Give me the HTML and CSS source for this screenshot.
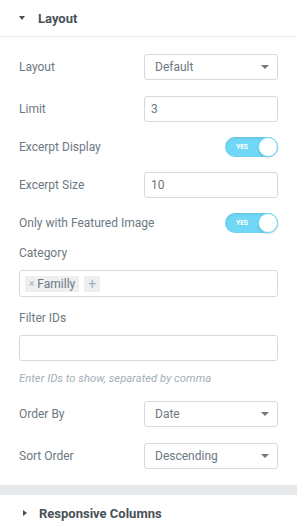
FILE: index.html
```html
<!DOCTYPE html>
<html lang="en">
<head>
    <meta charset="UTF-8">
    <title>Layout Controls</title>
    <link rel="stylesheet" href="styles.css">
</head>
<body>

    <div class="panel">
        <!-- Layout section -->
        <div class="section-head">
            <span class="caret-down"></span>
            <span class="section-title">Layout</span>
        </div>

        <div class="controls">
            <div class="row first">
                <span class="label">Layout</span>
                <div class="select"><span>Default</span><span class="arrow"></span></div>
            </div>
            <div class="row">
                <span class="label">Limit</span>
                <div class="input">3</div>
            </div>
            <div class="row">
                <span class="label">Excerpt Display</span>
                <div class="switch"><span class="switch-text">YES</span><span class="knob"></span></div>
            </div>
            <div class="row">
                <span class="label">Excerpt Size</span>
                <div class="input">10</div>
            </div>
            <div class="row">
                <span class="label">Only with Featured Image</span>
                <div class="switch"><span class="switch-text">YES</span><span class="knob"></span></div>
            </div>

            <div class="block category">
                <span class="label">Category</span>
                <div class="tags">
                    <span class="tag"><span class="tag-x">×</span>Familly</span>
                    <span class="tag add">+</span>
                </div>
            </div>

            <div class="block filter">
                <span class="label">Filter IDs</span>
                <div class="input wide"></div>
                <p class="hint">Enter IDs to show, separated by comma</p>
            </div>

            <div class="row order">
                <span class="label">Order By</span>
                <div class="select"><span>Date</span><span class="arrow"></span></div>
            </div>
            <div class="row sort">
                <span class="label">Sort Order</span>
                <div class="select"><span>Descending</span><span class="arrow"></span></div>
            </div>
        </div>

        <div class="divider"></div>

        <!-- Collapsed section -->
        <div class="section-head">
            <span class="caret-right"></span>
            <span class="section-title">Responsive Columns</span>
        </div>
    </div>

</body>
</html>
```

FILE: styles.css
```css
* {
    margin: 0;
    padding: 0;
    box-sizing: border-box;
}

body {
    font-family: Roboto, 'Liberation Sans', sans-serif;
    background: #fff;
    color: #6d7882;
    font-size: 12px;
    overflow: hidden;
}

.panel {
    width: 297px;
}

.section-head {
    height: 37px;
    display: flex;
    align-items: center;
    padding-left: 19px;
    border-bottom: 1px solid #e6e9ec;
}

.section-title {
    font-size: 13px;
    font-weight: 700;
    color: #495157;
}

.caret-down {
    width: 0;
    height: 0;
    border-left: 3.5px solid transparent;
    border-right: 3.5px solid transparent;
    border-top: 4px solid #495157;
    margin-right: 13px;
}

.caret-right {
    width: 0;
    height: 0;
    border-top: 3.5px solid transparent;
    border-bottom: 3.5px solid transparent;
    border-left: 4px solid #495157;
    margin-left: 4px;
    margin-right: 12px;
}

.controls {
    padding: 17px 19px 16px;
    display: flex;
    flex-direction: column;
}

.row {
    height: 26px;
    display: flex;
    align-items: center;
    justify-content: space-between;
    margin-bottom: 12px;
}

.row.first {
    margin-bottom: 16px;
}

.label {
    display: block;
    line-height: 15px;
}

.select, .input {
    width: 134px;
    height: 26px;
    border: 1px solid #d5dadf;
    border-radius: 3px;
    display: flex;
    align-items: center;
    color: #6d7882;
}

.select {
    padding: 0 10px;
    justify-content: space-between;
}

.input {
    padding: 0 6px;
}

.input.wide {
    width: 100%;
}

.arrow {
    width: 0;
    height: 0;
    border-left: 4px solid transparent;
    border-right: 4px solid transparent;
    border-top: 4px solid #6d7882;
    margin-right: -2px;
}

.switch {
    width: 53px;
    height: 20px;
    border-radius: 10px;
    background: #71d7f7;
    box-shadow: inset 0 1px 3px rgba(0, 0, 0, 0.12);
    display: flex;
    align-items: center;
    justify-content: space-between;
    padding-left: 11px;
}

.switch-text {
    font-size: 7px;
    font-weight: 700;
    color: #fff;
    letter-spacing: -0.2px;
}

.knob {
    width: 20px;
    height: 20px;
    border-radius: 50%;
    background: #fff;
    border: 1px solid #71d7f7;
    box-shadow: 0 1px 2px rgba(0, 0, 0, 0.15);
}

.block .label {
    margin-bottom: 9px;
}

.category {
    margin-top: -2px;
}

.tags {
    height: 27px;
    border: 1px solid #d5dadf;
    border-radius: 3px;
    display: flex;
    align-items: center;
    gap: 5px;
    padding: 0 5px;
}

.tag {
    height: 16px;
    background: #edeff1;
    display: flex;
    align-items: center;
    padding: 0 4px;
    color: #6d7882;
    font-size: 12px;
}

.tag-x {
    font-size: 10px;
    color: #a4afb7;
    margin-right: 3px;
}

.tag.add {
    width: 16px;
    justify-content: center;
    color: #a4afb7;
    font-size: 14px;
    padding: 0;
}

.filter {
    margin-top: 14px;
}

.hint {
    font-size: 11.3px;
    font-style: italic;
    color: #a4afb7;
    line-height: 14px;
    margin-top: 11px;
}

.row.order {
    margin-top: 15px;
    margin-bottom: 16px;
}

.row.sort {
    margin-bottom: 0;
}

.divider {
    height: 10px;
    background: #e6e9ec;
}
```
